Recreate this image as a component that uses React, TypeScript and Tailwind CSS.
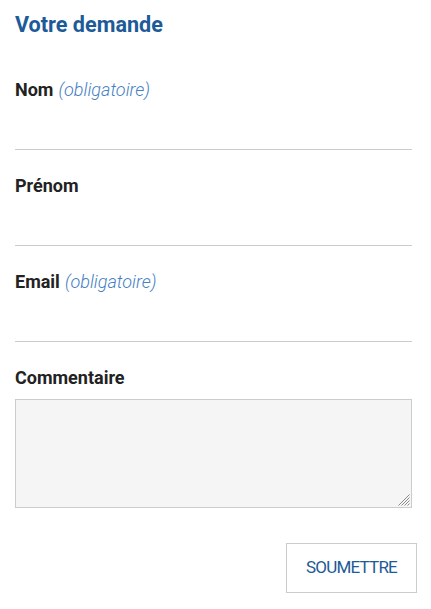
import React from "react";

function Field({ label, required }: { label: string; required?: boolean }) {
  return (
    <div className="mb-[24px]">
      <label className="block h-[24px] text-[18px] leading-[24px] font-bold text-[#222222]">
        {label}
        {required && (
          <span className="ml-[5px] font-light italic text-[#4580c4]">(obligatoire)</span>
        )}
      </label>
      <input
        type="text"
        className="block w-full h-[48px] border-0 border-b border-[#cccccc] bg-transparent outline-none"
      />
    </div>
  );
}

export default function App() {
  return (
    <div
      className="w-[431px] min-h-[609px] bg-white pl-[15px] pr-[19px] pt-[12px]"
      style={{ fontFamily: "Roboto, 'Liberation Sans', sans-serif" }}
    >
      <h2 className="h-[26px] text-[21.6px] leading-[26px] font-bold text-[#1c5a98]">
        Votre demande
      </h2>
      <form className="mt-[40px] w-[397px]">
        <Field label="Nom" required />
        <Field label="Prénom" />
        <Field label="Email" required />
        <div>
          <label className="block h-[24px] text-[18px] leading-[24px] font-bold text-[#222222]">
            Commentaire
          </label>
          <div className="relative mt-[9px]">
            <textarea className="block w-full h-[109px] resize-none border border-[#cccccc] bg-[#f5f5f5] outline-none" />
            <svg
              className="absolute right-[2px] bottom-[2px]"
              width="12"
              height="12"
              viewBox="0 0 12 12"
            >
              <g stroke="#8a8a8a" strokeWidth="1" fill="none">
                <line x1="11.5" y1="0.5" x2="0.5" y2="11.5" />
                <line x1="11.5" y1="3.5" x2="3.5" y2="11.5" />
                <line x1="11.5" y1="6.5" x2="6.5" y2="11.5" />
                <line x1="11.5" y1="9.5" x2="9.5" y2="11.5" />
              </g>
            </svg>
          </div>
        </div>
        <div className="mt-[35px] flex justify-end mr-[-5px]">
          <button
            type="button"
            className="h-[50px] w-[131px] border border-[#cccccc] bg-white text-[17px] uppercase tracking-[-0.8px] text-[#1c5a98]"
          >
            Soumettre
          </button>
        </div>
      </form>
    </div>
  );
}
